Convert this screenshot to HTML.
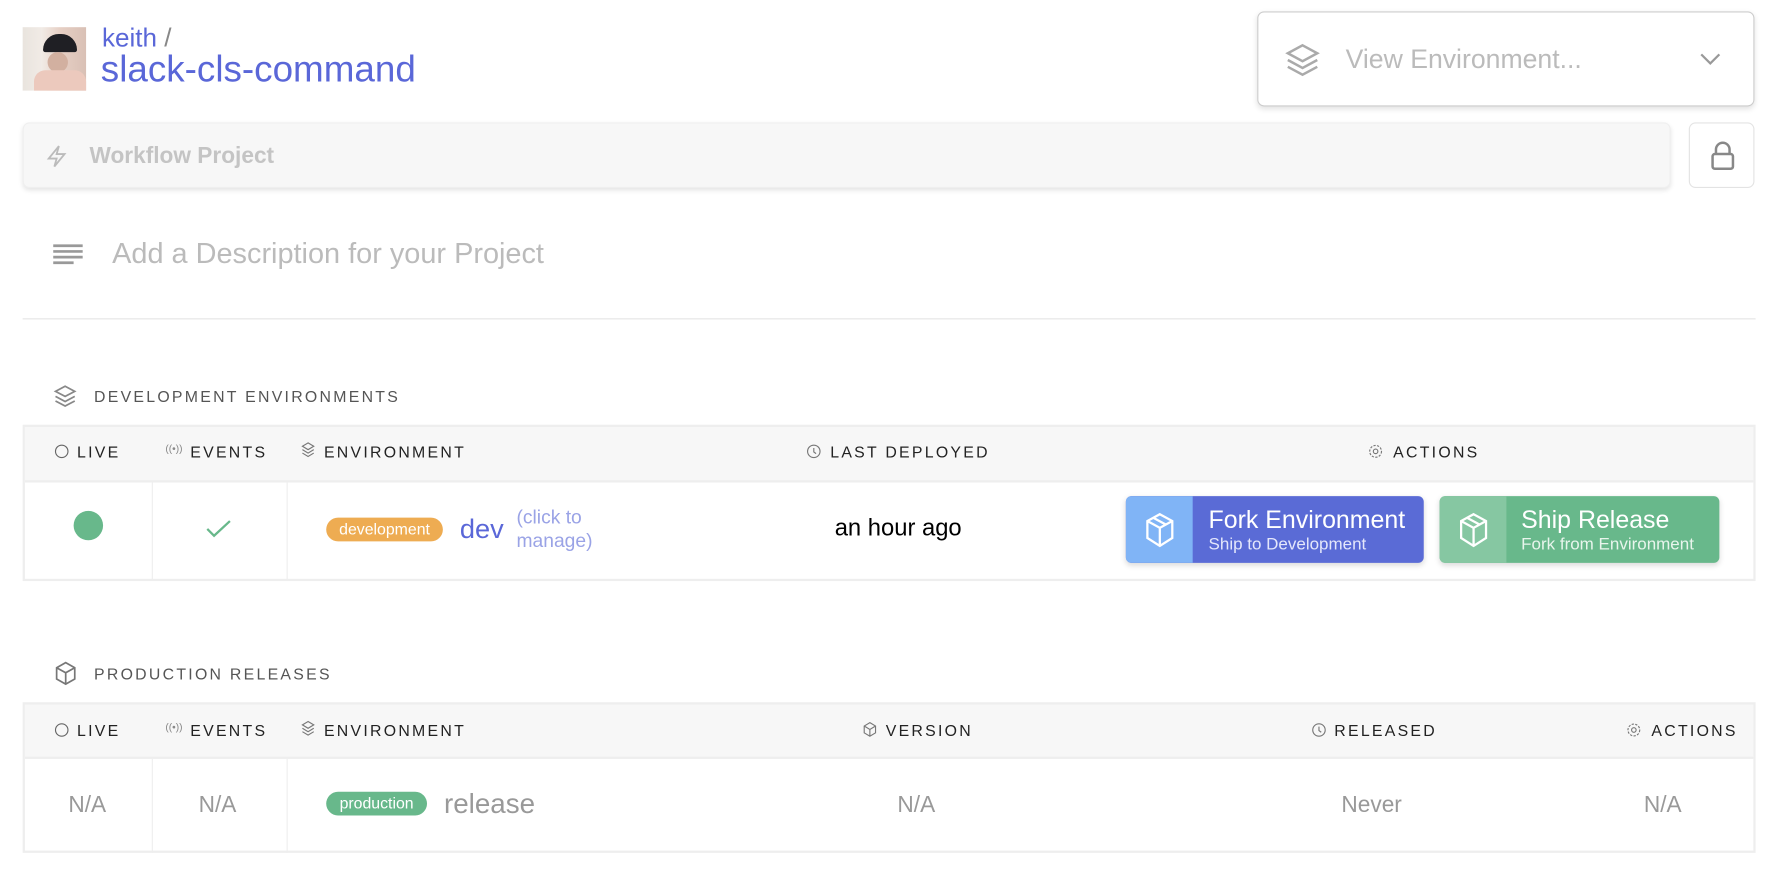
<!DOCTYPE html>
<html><head><meta charset="utf-8"><style>
html,body{margin:0;padding:0;background:#fff;overflow:hidden}
body{width:1776px;height:878px}
#w{position:absolute;left:0;top:0;width:1568px;height:775px;transform:scale(1.13265);transform-origin:0 0;font-family:"Liberation Sans",sans-serif}
.a{position:absolute}
.hd{font-size:14px;letter-spacing:2px;color:#222;white-space:nowrap}
.gr{color:#999;font-size:20px}
svg{overflow:visible}
</style></head><body><div id="w">
<div class="a" style="left:20px;top:24px;width:56px;height:56px;background:linear-gradient(90deg,#e9e4de 0,#f1ebe6 30%,#e6cfc4 60%,#d9c0b5 100%)">
 <div class="a" style="left:18px;top:6px;width:30px;height:16px;background:#1f1f24;border-radius:14px 14px 2px 2px"></div>
 <div class="a" style="left:22px;top:22px;width:18px;height:18px;background:#d2b0a0;border-radius:50%"></div>
 <div class="a" style="left:10px;top:38px;width:46px;height:18px;background:#ecc9bd;border-radius:10px 10px 0 0"></div>
</div>
<div class="a" style="left:90px;top:20px;font-size:23px;color:#5a67d8">keith <span style="color:#888">/</span></div>
<div class="a" style="left:89px;top:43px;font-size:32.5px;color:#5a67d8">slack-cls-command</div>

<div class="a" style="left:1110px;top:10px;width:437px;height:82px;border:1px solid #ccc;border-radius:6px;box-shadow:0 2px 5px rgba(0,0,0,.12)">
 <svg class="a" style="left:24px;top:28px" width="30" height="28" viewBox="0 0 30 28" fill="none" stroke="#aaa" stroke-width="2.2"><path d="M15 1 L28 8 L15 15 L2 8Z M2 14 L15 21 L28 14 M2 20 L15 27 L28 20"/></svg>
 <div class="a" style="left:77px;top:28px;font-size:23.5px;color:#bbb">View Environment...</div>
 <svg class="a" style="left:390px;top:36px" width="18" height="10" fill="none" stroke="#999" stroke-width="2"><path d="M1 1 L9 9 L17 1"/></svg>
</div>

<div class="a" style="left:20px;top:108px;width:1455px;height:58px;background:#f7f7f7;border:1px solid #efefef;box-sizing:border-box;border-radius:6px;box-shadow:0 2px 4px rgba(0,0,0,.1)">
 <svg class="a" style="left:20px;top:19px" width="18" height="20" fill="none" stroke="#bbb" stroke-width="1.6"><path d="M11 1 L2 12 L9 12 L7 19 L16 8 L9 8 Z"/></svg>
 <div class="a" style="left:58px;top:18px;font-size:20px;font-weight:bold;color:#c4c4c4">Workflow Project</div>
</div>
<div class="a" style="left:1491px;top:108px;width:58px;height:58px;border:1px solid #e3e3e3;box-sizing:border-box;border-radius:6px">
 <svg class="a" style="left:18px;top:16px" width="22" height="26" fill="none" stroke="#888" stroke-width="2.2"><path d="M5 11 V7 a6 6 0 0 1 12 0 V11"/><rect x="2" y="11" width="18" height="13" rx="2"/></svg>
</div>

<svg class="a" style="left:47px;top:215px" width="26" height="18" stroke="#999" stroke-width="2.4"><path d="M0 2H26M0 7H26M0 12H26M0 17H18"/></svg>
<div class="a" style="left:99px;top:210px;font-size:25.5px;color:#bbb">Add a Description for your Project</div>
<div class="a" style="left:20px;top:281px;width:1530px;height:1px;background:#e5e5e5"></div>

<svg class="a" style="left:48px;top:340px" width="19" height="19" fill="none" stroke="#888" stroke-width="1.5"><path d="M9.5 1 L18 5.5 L9.5 10 L1 5.5Z M1 10 L9.5 14.5 L18 10 M1 14 L9.5 18.5 L18 14"/></svg>
<div class="a hd" style="left:83px;top:342px;color:#555">DEVELOPMENT ENVIRONMENTS</div>

<div class="a" style="left:20px;top:375px;width:1530px;height:138px;border:2px solid #eee;box-sizing:border-box">
 <div class="a" style="left:0;top:0;right:0;height:47px;background:#f7f7f7;border-bottom:2px solid #eee"></div>
 <div class="a" style="left:112px;top:49px;width:1px;height:87px;background:#eee"></div>
 <div class="a" style="left:231px;top:49px;width:1px;height:87px;background:#eee"></div>
</div>
<svg class="a" style="left:48px;top:392px" width="13" height="13" fill="none" stroke="#666"><circle cx="6.5" cy="6.5" r="5.5"/></svg>
<div class="a hd" style="left:68px;top:391px">LIVE</div>
<div class="a" style="left:146px;top:391px;font-size:9px;color:#888">((•))</div>
<div class="a hd" style="left:168px;top:391px">EVENTS</div>
<svg class="a" style="left:266px;top:390px" width="12" height="13" fill="none" stroke="#777"><path d="M6 1 L11 4 L6 7 L1 4Z M1 7 L6 10 L11 7 M1 10 L6 13 L11 10"/></svg>
<div class="a hd" style="left:286px;top:391px">ENVIRONMENT</div>
<svg class="a" style="left:712px;top:392px" width="13" height="13" fill="none" stroke="#777"><circle cx="6.5" cy="6.5" r="5.5"/><path d="M6.5 3.5V7L8.5 8.5"/></svg>
<div class="a hd" style="left:733px;top:391px">LAST DEPLOYED</div>
<svg class="a" style="left:1208px;top:392px" width="13" height="13" fill="none" stroke="#777"><circle cx="6.5" cy="6.5" r="2"/><circle cx="6.5" cy="6.5" r="5.2" stroke-dasharray="2 1.2"/></svg>
<div class="a hd" style="left:1230px;top:391px">ACTIONS</div>

<div class="a" style="left:65px;top:451px;width:26px;height:26px;border-radius:50%;background:#68b88b"></div>
<svg class="a" style="left:182px;top:459px" width="22" height="16" fill="none" stroke="#68b88b" stroke-width="2"><path d="M1 8 L7 14 L21 1"/></svg>
<div class="a" style="left:288px;top:457px;width:103px;height:21px;border-radius:11px;background:#eeac52;color:#fff;font-size:14px;text-align:center;line-height:21px">development</div>
<div class="a" style="left:406px;top:454px;font-size:24px;color:#5a67d8">dev</div>
<div class="a" style="left:456px;top:446px;font-size:17px;line-height:21px;color:#9aa3e6">(click to<br>manage)</div>
<div class="a" style="left:693px;top:455px;width:200px;text-align:center;font-size:21px;color:#000">an hour ago</div>

<div class="a" style="left:994px;top:438px;width:263px;height:59px;border-radius:5px;background:#5a6bd6;overflow:hidden;box-shadow:0 2px 5px rgba(0,0,0,.15)">
 <div class="a" style="left:0;top:0;width:59px;height:59px;background:#80b4f6"></div>
 <svg class="a" style="left:17px;top:15px" width="26" height="30" fill="none" stroke="#fff" stroke-width="2"><path d="M13 1 L24 7 V22 L13 29 L2 22 V7Z M2 7 L13 13 L24 7 M13 13 V29 M7 4 L18 10"/></svg>
 <div class="a" style="left:73px;top:8px;font-size:22px;color:#fff">Fork Environment</div>
 <div class="a" style="left:73px;top:34px;font-size:15px;color:#e4e7fb">Ship to Development</div>
</div>
<div class="a" style="left:1271px;top:438px;width:247px;height:59px;border-radius:5px;background:#68b88b;overflow:hidden;box-shadow:0 2px 5px rgba(0,0,0,.15)">
 <div class="a" style="left:0;top:0;width:59px;height:59px;background:#86c7a2"></div>
 <svg class="a" style="left:17px;top:15px" width="26" height="30" fill="none" stroke="#fff" stroke-width="2"><path d="M13 1 L24 7 V22 L13 29 L2 22 V7Z M2 7 L13 13 L24 7 M13 13 V29 M7 4 L18 10"/></svg>
 <div class="a" style="left:72px;top:8px;font-size:22px;color:#fff">Ship Release</div>
 <div class="a" style="left:72px;top:34px;font-size:15px;color:#e8f5ec">Fork from Environment</div>
</div>

<svg class="a" style="left:49px;top:584px" width="18" height="21" fill="none" stroke="#777" stroke-width="1.5"><path d="M9 1 L17 5.5 V15.5 L9 20 L1 15.5 V5.5Z M1 5.5 L9 10 L17 5.5 M9 10 V20"/></svg>
<div class="a hd" style="left:83px;top:587px;color:#555">PRODUCTION RELEASES</div>

<div class="a" style="left:20px;top:620px;width:1530px;height:133px;border:2px solid #eee;box-sizing:border-box">
 <div class="a" style="left:0;top:0;right:0;height:46px;background:#f7f7f7;border-bottom:2px solid #eee"></div>
 <div class="a" style="left:112px;top:48px;width:1px;height:83px;background:#eee"></div>
 <div class="a" style="left:231px;top:48px;width:1px;height:83px;background:#eee"></div>
</div>
<svg class="a" style="left:48px;top:638px" width="13" height="13" fill="none" stroke="#666"><circle cx="6.5" cy="6.5" r="5.5"/></svg>
<div class="a hd" style="left:68px;top:637px">LIVE</div>
<div class="a" style="left:146px;top:637px;font-size:9px;color:#888">((•))</div>
<div class="a hd" style="left:168px;top:637px">EVENTS</div>
<svg class="a" style="left:266px;top:636px" width="12" height="13" fill="none" stroke="#777"><path d="M6 1 L11 4 L6 7 L1 4Z M1 7 L6 10 L11 7 M1 10 L6 13 L11 10"/></svg>
<div class="a hd" style="left:286px;top:637px">ENVIRONMENT</div>
<svg class="a" style="left:762px;top:637px" width="12" height="14" fill="none" stroke="#777"><path d="M6 1 L11 4 V10 L6 13 L1 10 V4Z M1 4 L6 7 L11 4 M6 7V13"/></svg>
<div class="a hd" style="left:782px;top:637px">VERSION</div>
<svg class="a" style="left:1158px;top:638px" width="13" height="13" fill="none" stroke="#777"><circle cx="6.5" cy="6.5" r="5.5"/><path d="M6.5 3.5V7L8.5 8.5"/></svg>
<div class="a hd" style="left:1178px;top:637px">RELEASED</div>
<svg class="a" style="left:1436px;top:638px" width="13" height="13" fill="none" stroke="#777"><circle cx="6.5" cy="6.5" r="2"/><circle cx="6.5" cy="6.5" r="5.2" stroke-dasharray="2 1.2"/></svg>
<div class="a hd" style="left:1458px;top:637px">ACTIONS</div>

<div class="a gr" style="left:37px;top:700px;width:80px;text-align:center">N/A</div>
<div class="a gr" style="left:152px;top:700px;width:80px;text-align:center">N/A</div>
<div class="a" style="left:288px;top:699px;width:89px;height:21px;border-radius:11px;background:#68b88b;color:#fff;font-size:14px;text-align:center;line-height:21px">production</div>
<div class="a" style="left:392px;top:697px;font-size:24.5px;color:#999">release</div>
<div class="a gr" style="left:769px;top:700px;width:80px;text-align:center">N/A</div>
<div class="a gr" style="left:1161px;top:700px;width:100px;text-align:center">Never</div>
<div class="a gr" style="left:1428px;top:700px;width:80px;text-align:center">N/A</div>
</div></body></html>
